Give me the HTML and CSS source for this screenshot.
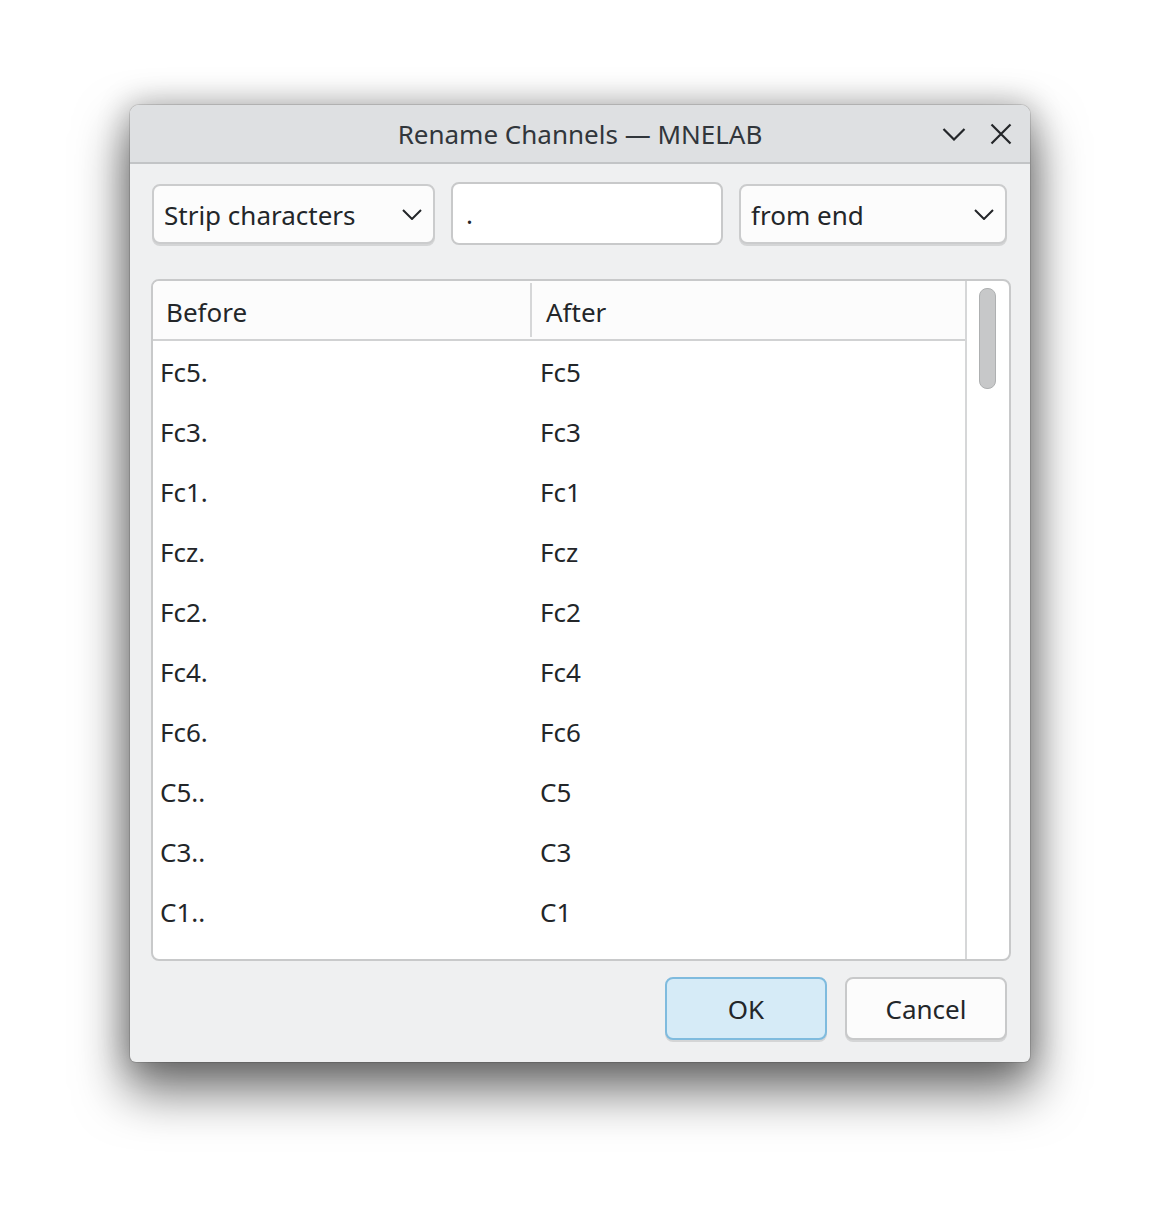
FILE: index.html
```html
<!DOCTYPE html>
<html lang="en">
<head>
  <meta charset="UTF-8">
  <meta name="viewport" content="width=device-width, initial-scale=1.0">
  <title>Rename Channels — MNELAB</title>
  <link rel="stylesheet" href="styles.css">
</head>
<body>
  <div class="window">
    <header class="titlebar">
      <span></span>
      <h1 class="title">Rename Channels — MNELAB</h1>
      <div class="title-buttons">
        <svg class="tb-min" width="24" height="14" viewBox="0 0 24 14"><path d="M1.5 2 L12 12.5 L22.5 2" fill="none" stroke="#232629" stroke-width="2.2"/></svg>
        <svg class="tb-close" width="22" height="22" viewBox="0 0 22 22"><path d="M1.5 1.5 L20.5 20.5 M20.5 1.5 L1.5 20.5" fill="none" stroke="#232629" stroke-width="2.2"/></svg>
      </div>
    </header>

    <main class="content">
      <div class="controls">
        <div class="combo combo-mode">
          <span>Strip characters</span>
          <svg width="20" height="11" viewBox="0 0 20 11"><path d="M1 1 L10 10 L19 1" fill="none" stroke="#232629" stroke-width="2"/></svg>
        </div>
        <div class="line-edit">.</div>
        <div class="combo combo-where">
          <span>from end</span>
          <svg width="20" height="11" viewBox="0 0 20 11"><path d="M1 1 L10 10 L19 1" fill="none" stroke="#232629" stroke-width="2"/></svg>
        </div>
      </div>

      <div class="table-frame">
        <div class="table">
          <div class="table-head">
            <div class="th th-before">Before</div>
            <div class="th th-after">After</div>
          </div>
          <div class="table-body" id="rows">
            <!-- rows filled by script -->
          </div>
        </div>
        <div class="scrollbar">
          <div class="scroll-handle"></div>
        </div>
      </div>

      <div class="buttons">
        <button class="btn btn-ok">OK</button>
        <button class="btn">Cancel</button>
      </div>
    </main>
  </div>

  <script>
    const channels = ['Fc5.', 'Fc3.', 'Fc1.', 'Fcz.', 'Fc2.', 'Fc4.', 'Fc6.', 'C5..', 'C3..', 'C1..'];
    const rows = document.getElementById('rows');

    // strip dots from the end
    channels.forEach((name) => {
      const after = name.replace(/\.+$/, '');
      rows.innerHTML += `
        <div class="tr">
          <div class="td td-before">${name}</div>
          <div class="td td-after">${after}</div>
        </div>
      `;
    });
  </script>
</body>
</html>
```

FILE: styles.css
```css
body {
  margin: 0;
  padding: 105px 0 0;
  min-height: 1216px;
  box-sizing: border-box;
  background-color: #ffffff;
  font-family: "Noto Sans", "Open Sans", sans-serif;
  font-size: 26px;
  color: #232629;
}

.window {
  width: 900px;
  margin: 0 auto;
  background-color: #eff0f1;
  border-radius: 9px 9px 6px 6px;
  overflow: hidden;
  box-shadow: 0 0 0 1px rgba(0, 0, 0, 0.12), 0 26px 50px 4px rgba(0, 0, 0, 0.55), 0 0 30px 3px rgba(0, 0, 0, 0.22);
}

.titlebar {
  height: 57px;
  display: grid;
  grid-template-columns: 1fr auto 1fr;
  align-items: center;
  background-color: #dee0e2;
  border-bottom: 2px solid #c2c4c6;
}

.title {
  margin: 0;
  font-size: 26px;
  font-weight: normal;
  color: #31363b;
}

.title-buttons {
  display: flex;
  justify-content: flex-end;
  align-items: center;
  gap: 24px;
  padding-right: 18px;
}

.tb-min {
  margin-top: 1px;
}

.content {
  padding: 18px 21px 22px 21px;
}

.controls {
  display: flex;
  align-items: flex-start;
  gap: 16px;
  margin-left: 1px;
}

.combo {
  height: 60px;
  box-sizing: border-box;
  display: flex;
  align-items: center;
  justify-content: space-between;
  padding: 1px 11px 0 10px;
  background-color: #fcfcfc;
  border: 2px solid #cbcccd;
  border-radius: 8px;
  box-shadow: 0 2px 0 #d4d5d6;
  margin-top: 2px;
}

.combo-mode {
  width: 283px;
}

.combo-where {
  width: 268px;
}

.line-edit {
  width: 272px;
  height: 63px;
  box-sizing: border-box;
  padding: 0 13px;
  display: flex;
  align-items: center;
  background-color: #ffffff;
  border: 2px solid #c8c9ca;
  border-radius: 8px;
}

.table-frame {
  margin: 34px -2px 0 0;
  height: 682px;
  box-sizing: border-box;
  display: flex;
  background-color: #ffffff;
  border: 2px solid #c8c9ca;
  border-radius: 8px;
  overflow: hidden;
}

.table {
  width: 812px;
  border-right: 2px solid #d6d7d8;
  overflow: hidden;
}

.table-head {
  display: grid;
  grid-template-columns: 379px 1fr;
  height: 58px;
  background-color: #fcfcfc;
  border-bottom: 2px solid #d1d2d3;
}

.th {
  display: flex;
  align-items: center;
  padding: 3px 0 0 14px;
}

.th-before {
  padding-left: 13px;
  border-right: 2px solid #d6d7d8;
  margin: 2px 0;
}

.table-body {
  padding-top: 1px;
}

.tr {
  display: grid;
  grid-template-columns: 380px 1fr;
  height: 60px;
  align-items: center;
}

.td {
  padding-left: 7px;
}

.scrollbar {
  flex: 1;
  padding: 7px 13px 0 12px;
}

.scroll-handle {
  height: 99px;
  background-color: #c7c8c9;
  border: 1px solid #aeb0b1;
  border-radius: 8px;
}

.buttons {
  display: flex;
  justify-content: flex-end;
  gap: 18px;
  margin-top: 16px;
  padding-right: 2px;
}

.btn {
  width: 162px;
  height: 63px;
  font-family: inherit;
  font-size: 26px;
  color: #232629;
  background-color: #fcfcfc;
  border: 2px solid #c8c9ca;
  border-radius: 8px;
  box-shadow: 0 2px 0 #d4d5d6;
  padding: 0;
}

.btn-ok {
  background-color: #d6ebf7;
  border-color: #7fbbde;
}
```
